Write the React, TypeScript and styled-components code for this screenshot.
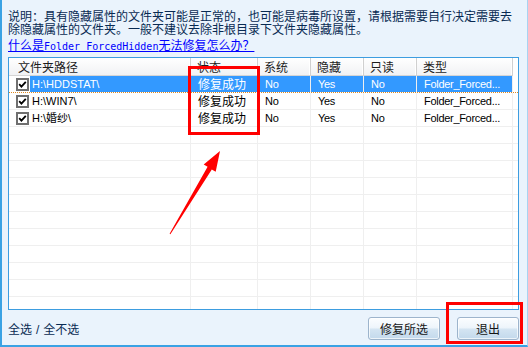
import React from 'react';
import styled, { createGlobalStyle } from 'styled-components';

const GlobalStyle = createGlobalStyle`
  html, body {
    margin: 0;
    padding: 0;
    background: #eaf3fc;
  }
  body {
    font-family: 'Liberation Sans', 'Noto Sans CJK SC', sans-serif;
    font-size: 12px;
  }
`;

const Window = styled.div`
  position: relative;
  width: 528px;
  height: 347px;
  box-sizing: border-box;
  background: #eaf3fc;
  border-left: 2px solid #3aa2e4;
  border-bottom: 2px solid #3aa2e4;
  border-right: 1px solid #a9d3f1;
  padding: 9px 0 0 6px;
  display: flex;
  flex-direction: column;
  overflow: hidden;
`;

const Description = styled.p`
  margin: 0;
  width: 504px;
  color: #082a52;
  font-family: 'Noto Sans CJK SC', sans-serif;
  font-size: 12px;
  line-height: 13px;
`;

const HelpLink = styled.a`
  display: block;
  margin-top: 3px;
  color: #0000ff;
  font-family: 'Noto Sans CJK SC', sans-serif;
  font-size: 12px;
  line-height: 13px;
  text-decoration: underline;
  cursor: pointer;
`;

const Latin = styled.span`
  font-family: 'DejaVu Sans Mono', monospace;
  font-size: 10px;
`;

const ListBox = styled.div`
  margin-top: 4px;
  width: 511px;
  height: 253px;
  box-sizing: border-box;
  border: 1px solid #3d9de0;
  background: #ffffff;
  overflow: hidden;
`;

const COLS = '182px 67px 53px 53px 53px 96px';

const HeaderRow = styled.div`
  display: grid;
  grid-template-columns: ${COLS};
  height: 18px;
`;

const HeaderCell = styled.div<{ $first?: boolean }>`
  box-sizing: border-box;
  padding-left: ${(p) => (p.$first ? '9px' : '6px')};
  background: linear-gradient(#ffffff, #f1f2f4);
  border-bottom: 1px solid #d5d5d5;
  border-right: 1px solid #d0d0d0;
  box-shadow: inset -1px 0 0 #ffffff;
  color: #1c1c1c;
  font-family: 'Noto Sans CJK SC', sans-serif;
  font-size: 12px;
  line-height: 17px;
  white-space: nowrap;
`;

const Row = styled.div<{ $selected?: boolean }>`
  display: grid;
  grid-template-columns: ${COLS};
  height: 17px;
  box-sizing: border-box;
  border-bottom: 1px ${(p) => (p.$selected ? 'dotted #e08a20' : 'solid #efefef')};
`;

const Cell = styled.div<{ $selected?: boolean; $cjk?: boolean }>`
  box-sizing: border-box;
  padding-left: 7px;
  border-right: 1px solid #efefef;
  background: ${(p) => (p.$selected ? '#3399ff' : 'transparent')};
  color: ${(p) => (p.$selected ? '#ffffff' : '#000000')};
  font-family: ${(p) =>
    p.$cjk ? "'Noto Sans CJK SC', sans-serif" : "'Liberation Sans', 'Noto Sans CJK SC', sans-serif"};
  font-size: ${(p) => (p.$cjk ? '12px' : '11px')};
  letter-spacing: ${(p) => (p.$cjk ? '0' : '-0.3px')};
  line-height: 16px;
  white-space: nowrap;
  overflow: hidden;
`;

const PathCell = styled.div`
  display: flex;
  align-items: center;
  padding-left: 7px;
  border-right: 1px solid #efefef;
  overflow: hidden;
`;

const PathText = styled.span<{ $selected?: boolean }>`
  flex: 1;
  margin-left: 1px;
  padding-left: 2px;
  background: ${(p) => (p.$selected ? '#3399ff' : 'transparent')};
  color: ${(p) => (p.$selected ? '#ffffff' : '#000000')};
  font-family: 'Liberation Sans', 'Noto Sans CJK SC', sans-serif;
  font-size: 11px;
  line-height: 16px;
  white-space: nowrap;
`;

const Check = () => (
  <svg width="13" height="13" viewBox="0 0 13 13">
    <rect x="1" y="1" width="11" height="11" fill="#fff" stroke="#6f6f6f" strokeWidth="2" />
    <path d="M3.2 6.2 L5.4 8.6 L9.8 3.8" fill="none" stroke="#000" strokeWidth="1.8" />
  </svg>
);

const BottomBar = styled.div`
  width: 511px;
  display: flex;
  align-items: center;
  padding-top: 7px;
`;

const SelectLinks = styled.div`
  flex: 1;
  color: #082a52;
  font-family: 'Noto Sans CJK SC', sans-serif;
  font-size: 12px;
  span {
    font-family: 'Liberation Sans', sans-serif;
    padding: 0 4px;
  }
`;

const Button = styled.button<{ $w: number }>`
  width: ${(p) => p.$w}px;
  height: 23px;
  margin-left: ${(p) => (p.$w > 70 ? 0 : 17)}px;
  border: 1px solid #9db4cc;
  border-radius: 3px;
  background: linear-gradient(#fbfdff 0%, #eef5fb 45%, #d3e4f2 55%, #c3d9ec 100%);
  box-shadow: inset 0 0 0 1px rgba(255, 255, 255, 0.7);
  color: #151515;
  font-family: 'Noto Sans CJK SC', sans-serif;
  font-size: 12px;
  padding: 0;
`;

const Marker = styled.div<{ $x: number; $y: number; $w: number; $h: number }>`
  position: absolute;
  left: ${(p) => p.$x}px;
  top: ${(p) => p.$y}px;
  width: ${(p) => p.$w}px;
  height: ${(p) => p.$h}px;
  box-sizing: border-box;
  border: 3px solid #ff0000;
  pointer-events: none;
`;

const ArrowLayer = styled.svg`
  position: absolute;
  left: -2px;
  top: 0;
  pointer-events: none;
`;

const rows = [
  { path: 'H:\\HDDSTAT\\', selected: true },
  { path: 'H:\\WIN7\\' },
  { path: 'H:\\婚纱\\' },
];

export default function App() {
  const fillers = Array.from({ length: 12 });
  return (
    <Window>
      <GlobalStyle />
      <Description>
        说明：具有隐藏属性的文件夹可能是正常的，也可能是病毒所设置，请根据需要自行决定需要去除隐藏属性的文件夹。一般不建议去除非根目录下文件夹隐藏属性。
      </Description>
      <HelpLink>
        什么是<Latin>Folder ForcedHidden</Latin>无法修复怎么办？
      </HelpLink>
      <ListBox>
        <HeaderRow>
          <HeaderCell $first>文件夹路径</HeaderCell>
          <HeaderCell>状态</HeaderCell>
          <HeaderCell>系统</HeaderCell>
          <HeaderCell>隐藏</HeaderCell>
          <HeaderCell>只读</HeaderCell>
          <HeaderCell>类型</HeaderCell>
        </HeaderRow>
        {rows.map((r) => (
          <Row key={r.path} $selected={r.selected}>
            <PathCell>
              <Check />
              <PathText $selected={r.selected}>{r.path}</PathText>
            </PathCell>
            <Cell $selected={r.selected} $cjk>修复成功</Cell>
            <Cell $selected={r.selected}>No</Cell>
            <Cell $selected={r.selected}>Yes</Cell>
            <Cell $selected={r.selected}>No</Cell>
            <Cell $selected={r.selected}>Folder_Forced...</Cell>
          </Row>
        ))}
        {fillers.map((_, i) => (
          <Row key={i}>
            <Cell />
            <Cell />
            <Cell />
            <Cell />
            <Cell />
            <Cell />
          </Row>
        ))}
      </ListBox>
      <BottomBar>
        <SelectLinks>
          全选<span>/</span>全不选
        </SelectLinks>
        <Button $w={72}>修复所选</Button>
        <Button $w={62}>退出</Button>
      </BottomBar>

      <Marker $x={186} $y={66} $w={72} $h={69} />
      <Marker $x={444} $y={302} $w={77} $h={42} />
      <ArrowLayer width="528" height="347" viewBox="0 0 528 347">
        <polygon
          points="169.6,233.7 207.6,166.8 203.7,164.5 220,151 215.7,171.7 211.8,169.4 170.4,234.3"
          fill="#ff0000"
        />
      </ArrowLayer>
    </Window>
  );
}
